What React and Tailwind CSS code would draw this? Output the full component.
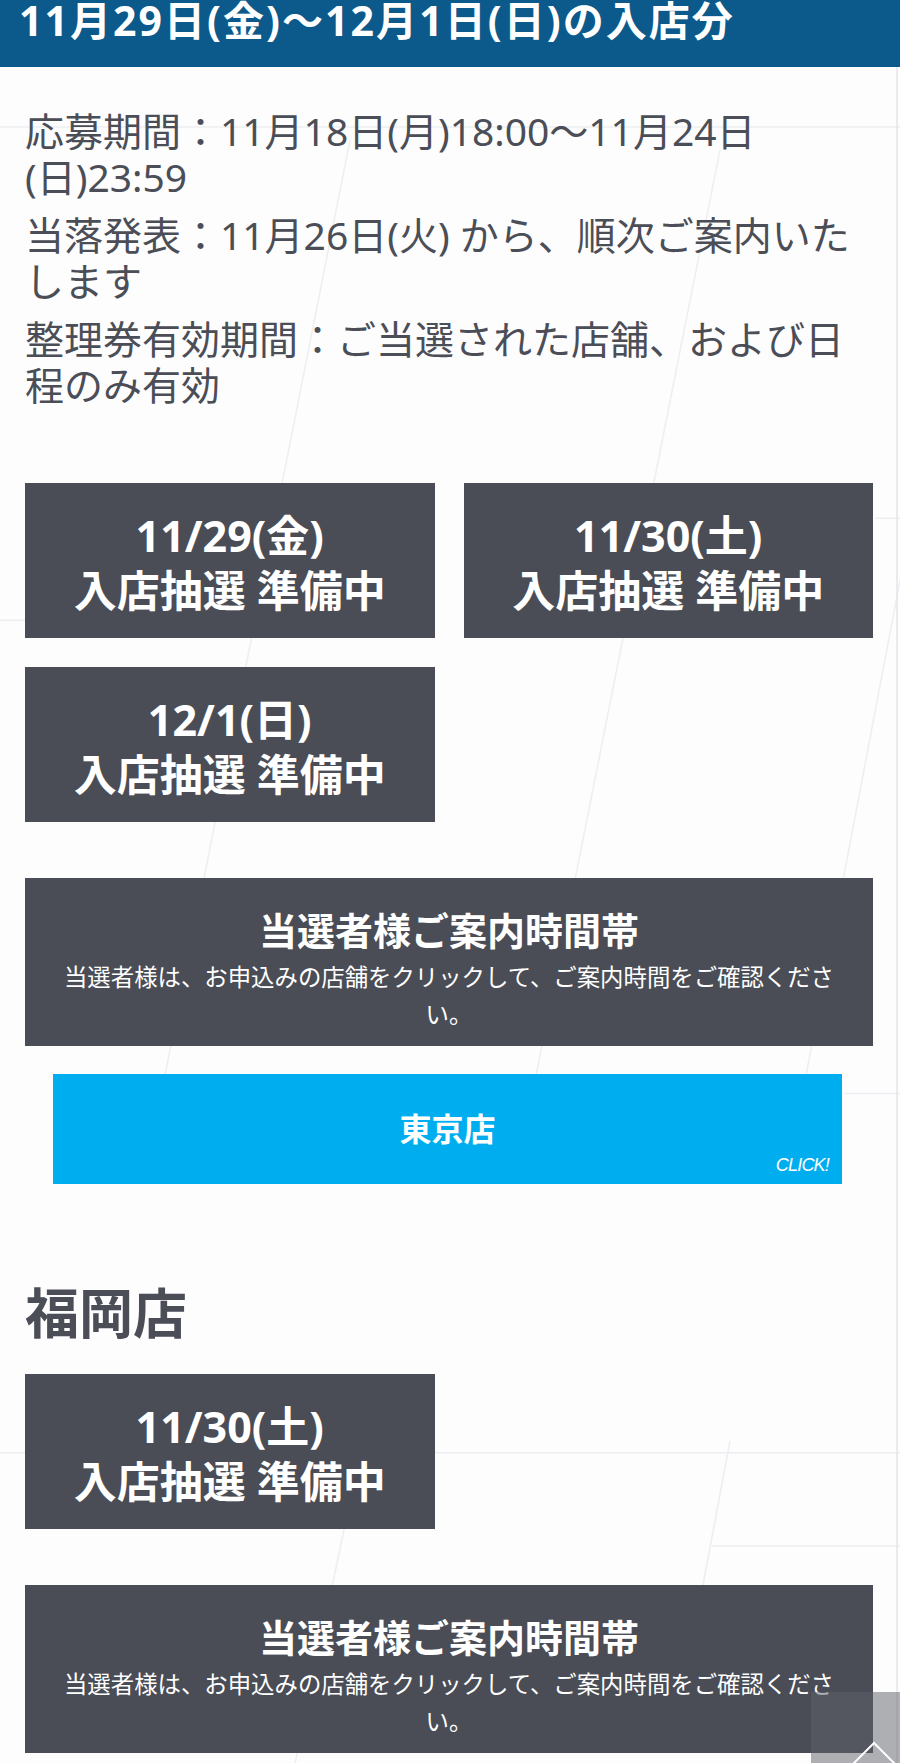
const dates = ["11/29(金)", "11/30(土)", "12/1(日)"];

function DateBox({ date }) {
  return (
    <div className="bg-[#4a4d55] pt-[25px] pb-[20px] text-center text-[43px] leading-[55px] font-bold text-white">
      <div>{date}</div>
      <div>入店抽選 準備中</div>
    </div>
  );
}

function GuideBox() {
  return (
    <div className="bg-[#4a4d55] px-[28px] pt-[29px] pb-[13px] text-center text-white">
      <div className="text-[38px] leading-[46px] font-bold">当選者様ご案内時間帯</div>
      <p className="mt-[6px] text-[23.4px] leading-[37px]">
        当選者様は、お申込みの店舗をクリックして、ご案内時間をご確認ください。
      </p>
    </div>
  );
}

function BgLines() {
  return (
    <svg
      className="absolute inset-0 h-full w-full"
      viewBox="0 0 900 1763"
      preserveAspectRatio="none"
      fill="none"
      stroke="#eceef1"
      strokeWidth="1.5"
    >
      <line x1="0" y1="127" x2="900" y2="127" />
      <line x1="350" y1="140" x2="160" y2="1100" />
      <line x1="720" y1="150" x2="535" y2="1080" />
      <line x1="900" y1="580" x2="805" y2="1080" />
      <line x1="875" y1="518" x2="900" y2="518" />
      <line x1="0" y1="620" x2="30" y2="620" />
      <line x1="844" y1="1093" x2="900" y2="1093" />
      <line x1="0" y1="1452" x2="900" y2="1452" />
      <line x1="712" y1="1545" x2="900" y2="1545" />
      <line x1="350" y1="1500" x2="295" y2="1763" />
      <line x1="730" y1="1440" x2="700" y2="1600" />
      <line x1="897" y1="67" x2="897" y2="1763" stroke="#e3e5e8" />
    </svg>
  );
}

export default function App() {
  return (
    <div className="relative min-h-[1763px] bg-[#fdfdfd] font-['Noto_Sans','Noto_Sans_CJK_JP',sans-serif] text-[#4b4e57]">
      <BgLines />
      <div className="relative">
        <header className="h-[67px] bg-[#0b5a8b] pl-[19px] text-[41px] leading-[41px] font-bold tracking-[0.05em] text-white">
          11月29日(金)〜12月1日(日)の入店分
        </header>

        <div className="pl-[25px] pr-[27px] pb-[11px]">
          <div className="mt-[41px] space-y-[12px] text-[39px] leading-[46px]">
            <p>応募期間：11月18日(月)18:00〜11月24日(日)23:59</p>
            <p>当落発表：11月26日(火) から、順次ご案内いたします</p>
            <p>整理券有効期間：ご当選された店舗、および日程のみ有効</p>
          </div>

          <div className="mt-[75px] grid grid-cols-2 gap-[29px]">
            {dates.map((d) => (
              <DateBox key={d} date={d} />
            ))}
          </div>

          <div className="mt-[56px]">
            <GuideBox />
          </div>

          <button
            type="button"
            className="relative mt-[28px] ml-[28px] mr-[31px] flex h-[110px] w-[calc(100%-59px)] items-center justify-center bg-[#00aeef] text-[32px] font-bold text-white"
          >
            東京店
            <span className="absolute right-[13px] bottom-[5px] font-['Liberation_Sans',sans-serif] text-[18px] italic tracking-[-0.8px] font-normal">
              CLICK!
            </span>
          </button>

          <h2 className="mt-[95px] text-[54px] leading-[68px] font-bold">福岡店</h2>

          <div className="mt-[27px] grid grid-cols-2 gap-[29px]">
            <DateBox date="11/30(土)" />
          </div>

          <div className="mt-[56px]">
            <GuideBox />
          </div>
        </div>
      </div>

      <div className="fixed right-0 bottom-0 h-[71px] w-[89px] overflow-hidden bg-[rgba(94,98,105,0.5)]">
        <svg className="h-full w-full" viewBox="0 0 89 71" fill="none" stroke="#fff" strokeWidth="2">
          <polyline points="41,73 63,51 85,73" />
        </svg>
      </div>
    </div>
  );
}
